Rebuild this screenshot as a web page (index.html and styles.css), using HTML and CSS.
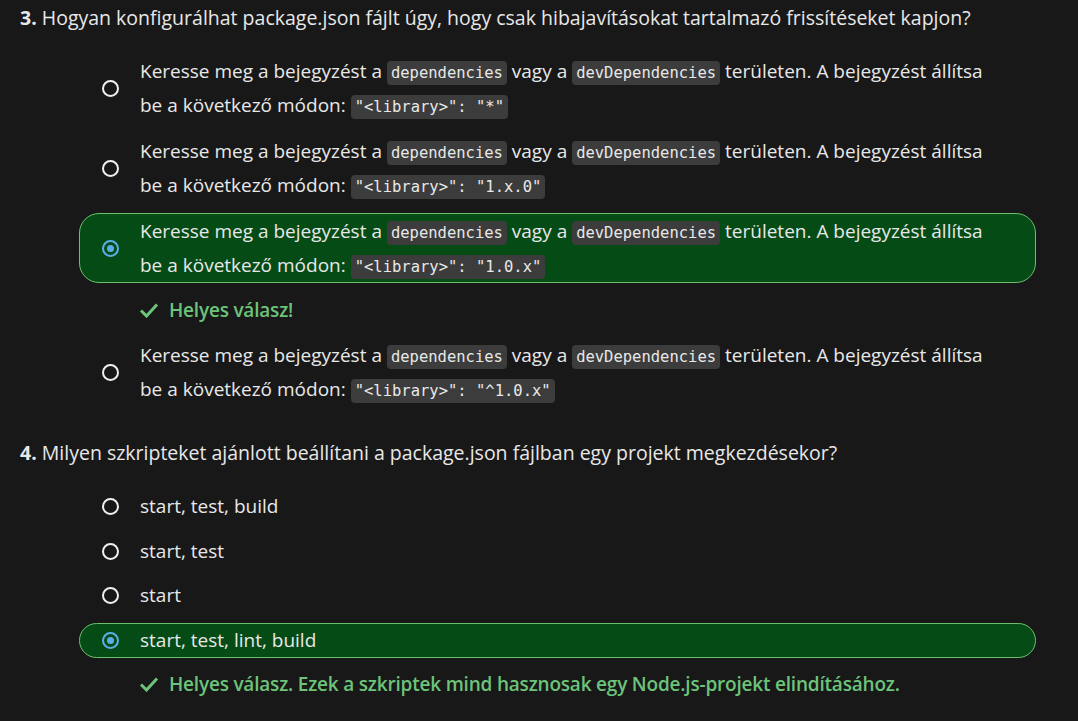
FILE: index.html
```html
<!DOCTYPE html>
<html lang="hu">
<head>
<meta charset="utf-8">
<title>Kvíz</title>
<link rel="stylesheet" href="styles.css">
</head>
<body>
<main class="quiz">
  <section class="question">
    <h2 class="q-title"><b>3.</b> Hogyan konfigurálhat package.json fájlt úgy, hogy csak hibajavításokat tartalmazó frissítéseket kapjon?</h2>
    <ul class="options">
      <li class="option">
        <span class="radio"></span>
        <span class="opt-text">Keresse meg a bejegyzést a <code>dependencies</code> vagy a <code>devDependencies</code> területen. A bejegyzést állítsa be a következő módon: <code>"&lt;library&gt;": "*"</code></span>
      </li>
      <li class="option">
        <span class="radio"></span>
        <span class="opt-text">Keresse meg a bejegyzést a <code>dependencies</code> vagy a <code>devDependencies</code> területen. A bejegyzést állítsa be a következő módon: <code>"&lt;library&gt;": "1.x.0"</code></span>
      </li>
      <li class="option correct">
        <span class="radio checked"></span>
        <span class="opt-text">Keresse meg a bejegyzést a <code>dependencies</code> vagy a <code>devDependencies</code> területen. A bejegyzést állítsa be a következő módon: <code>"&lt;library&gt;": "1.0.x"</code></span>
      </li>
      <li class="feedback">
        <svg class="check" viewBox="0 0 20 16" width="20" height="16"><path d="M2 8.5 L7.5 14 L18 2.5" fill="none" stroke="currentColor" stroke-width="3" stroke-linejoin="miter"/></svg>
        <span>Helyes válasz!</span>
      </li>
      <li class="option">
        <span class="radio"></span>
        <span class="opt-text">Keresse meg a bejegyzést a <code>dependencies</code> vagy a <code>devDependencies</code> területen. A bejegyzést állítsa be a következő módon: <code>"&lt;library&gt;": "^1.0.x"</code></span>
      </li>
    </ul>
  </section>
  <section class="question">
    <h2 class="q-title"><b>4.</b> Milyen szkripteket ajánlott beállítani a package.json fájlban egy projekt megkezdésekor?</h2>
    <ul class="options short">
      <li class="option"><span class="radio"></span><span class="opt-text">start, test, build</span></li>
      <li class="option"><span class="radio"></span><span class="opt-text">start, test</span></li>
      <li class="option"><span class="radio"></span><span class="opt-text">start</span></li>
      <li class="option correct"><span class="radio checked"></span><span class="opt-text">start, test, lint, build</span></li>
      <li class="feedback">
        <svg class="check" viewBox="0 0 20 16" width="20" height="16"><path d="M2 8.5 L7.5 14 L18 2.5" fill="none" stroke="currentColor" stroke-width="3" stroke-linejoin="miter"/></svg>
        <span>Helyes válasz. Ezek a szkriptek mind hasznosak egy Node.js-projekt elindításához.</span>
      </li>
    </ul>
  </section>
</main>
</body>
</html>
```
FILE: styles.css
```css
* { box-sizing: border-box; }
html, body { margin: 0; padding: 0; }
body {
  background: #181818;
  color: #e8e8e8;
  font-family: "Open Sans", "Noto Sans", "Liberation Sans", sans-serif;
  font-size: 19px;
  overflow: hidden;
}
.quiz { padding: 0 20px; width: 1078px; }
.question { margin-bottom: 28px; }
.q-title {
  margin: 0;
  font-size: 19.5px;
  font-weight: 400;
  line-height: 36px;
  white-space: nowrap;
}
.q-title b { font-weight: 700; }
.options {
  list-style: none;
  margin: 17px 0 0 59px;
  padding: 0;
  width: 957px;
  display: flex;
  flex-direction: column;
  gap: 10px;
}
.options.short { gap: 9.5px; margin-top: 18px; }
.option {
  display: flex;
  align-items: center;
  border: 1px solid transparent;
  border-radius: 20px;
  padding: 0 34px 0 22px;
  line-height: 34px;
}
.options.short .option { line-height: 33px; }
.option.correct {
  background: #054b16;
  border-color: #6cc06c;
}
.radio {
  flex: none;
  width: 17px;
  height: 17px;
  border: 2px solid #f0f0f0;
  border-radius: 50%;
  margin-right: 21px;
  display: flex;
  align-items: center;
  justify-content: center;
}
.radio.checked { border-color: #5aaee8; }
.radio.checked::after {
  content: "";
  width: 7px;
  height: 7px;
  border-radius: 50%;
  background: #5aaee8;
}
.opt-text { flex: 1; }
code {
  font-family: "DejaVu Sans Mono", "Liberation Mono", monospace;
  font-size: 15.5px;
  line-height: 1;
  letter-spacing: 0;
  background: #3c3c3c;
  color: #e8e8e8;
  border-radius: 4px;
  padding: 3px 4px;
}
.feedback {
  display: flex;
  align-items: center;
  padding-left: 60px;
  line-height: 34px;
  color: #6cc47a;
  font-weight: 600;
  letter-spacing: -0.2px;
}
.check { margin-right: 10px; flex: none; }
```
